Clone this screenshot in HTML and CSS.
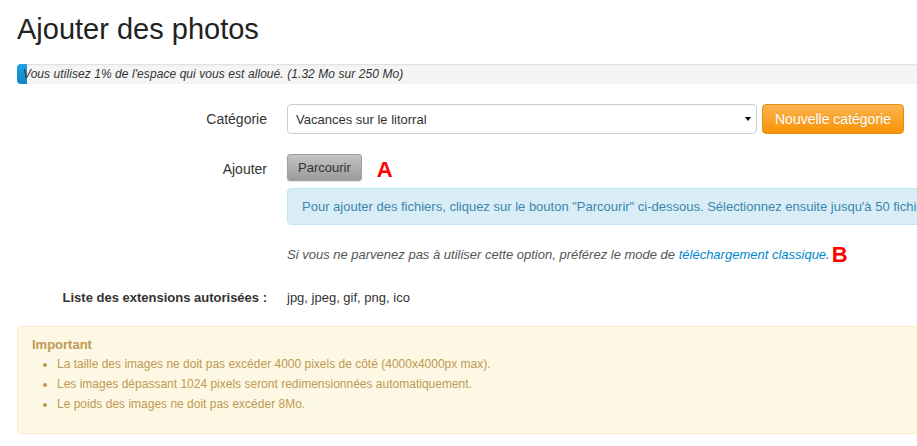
FILE: index.html
```html
<!DOCTYPE html>
<html lang="fr">
<head>
<meta charset="utf-8">
<title>Ajouter des photos</title>
<link rel="stylesheet" href="styles.css">
</head>
<body>
<div class="page">
  <h1 class="title">Ajouter des photos</h1>
  <div class="quota">
    <div class="quota-fill" style="width:10px"></div>
    <span class="quota-text">Vous utilisez 1% de l'espace qui vous est alloué. (1.32 Mo sur 250 Mo)</span>
  </div>

  <div class="form">
    <div class="label">Catégorie</div>
    <div class="field cat-field">
      <div class="select">
        <span>Vacances sur le litorral</span>
        <span class="caret"></span>
      </div>
      <button class="btn-orange">Nouvelle catégorie</button>
    </div>

    <div class="label label-add">Ajouter</div>
    <div class="field add-field">
      <div class="browse-row">
        <button class="btn-gray">Parcourir</button>
        <span class="mark mark-a">A</span>
      </div>
      <div class="alert-info">Pour ajouter des fichiers, cliquez sur le bouton "Parcourir" ci-dessous. Sélectionnez ensuite jusqu'à 50 fichiers à la fois.</div>
      <p class="hint">Si vous ne parvenez pas à utiliser cette option, préférez le mode de <a href="#" class="link">téléchargement classique</a>.<span class="mark mark-b">B</span></p>
    </div>

    <div class="label label-bold">Liste des extensions autorisées :</div>
    <div class="field ext">jpg, jpeg, gif, png, ico</div>
  </div>

  <div class="alert-warning">
    <div class="warn-title">Important</div>
    <ul class="warn-list">
      <li>La taille des images ne doit pas excéder 4000 pixels de côté (4000x4000px max).</li>
      <li>Les images dépassant 1024 pixels seront redimensionnées automatiquement.</li>
      <li>Le poids des images ne doit pas excéder 8Mo.</li>
    </ul>
  </div>
</div>
</body>
</html>
```

FILE: styles.css
```css
html, body {
  margin: 0;
  padding: 0;
  background: #fff;
  overflow: hidden;
}
body {
  font-family: "Liberation Sans", Arial, sans-serif;
  font-size: 13px;
  color: #333;
}
.page {
  width: 960px;
  padding: 0 0 0 17px;
}
.title {
  margin: 0;
  padding-top: 12px;
  font-size: 29px;
  font-weight: normal;
  line-height: 34px;
  color: #222;
}
.quota {
  position: relative;
  margin-top: 18px;
  height: 20px;
  background: #f5f5f5;
  border-radius: 4px 0 0 4px;
  box-shadow: inset 0 1px 2px rgba(0,0,0,0.1);
  display: flex;
  align-items: center;
}
.quota-fill {
  position: absolute;
  left: 0;
  top: 0;
  bottom: 0;
  background: linear-gradient(#1fa3e3, #1383c6);
  border-radius: 4px 0 0 4px;
}
.quota-text {
  position: relative;
  padding-left: 6px;
  font-style: italic;
  font-size: 12px;
  letter-spacing: 0.07px;
  color: #333;
}
.form {
  display: grid;
  grid-template-columns: 250px 1fr;
  column-gap: 20px;
  margin-top: 20px;
}
.label {
  text-align: right;
  font-size: 14px;
  color: #333;
  line-height: 30px;
}
.label-add {
  margin-top: 22px;
  line-height: 27px;
}
.label-bold {
  font-weight: bold;
  font-size: 13px;
  line-height: 20px;
}
.cat-field {
  display: flex;
  gap: 5px;
}
.select {
  height: 28px;
  border: 1px solid #ccc;
  border-radius: 4px;
  display: flex;
  align-items: center;
  justify-content: space-between;
  padding: 0 5px 0 8px;
  box-sizing: content-box;
  width: 455px;
  font-size: 13px;
  color: #333;
}
.caret {
  width: 0;
  height: 0;
  border-left: 3px solid transparent;
  border-right: 3px solid transparent;
  border-top: 4px solid #000;
}
.btn-orange {
  height: 30px;
  padding: 0 12px;
  border: 1px solid #e38d13;
  border-radius: 4px;
  background: linear-gradient(#fbb450, #f89406);
  color: #fff;
  font-family: inherit;
  font-size: 14px;
  text-shadow: 0 -1px 0 rgba(0,0,0,0.1);
}
.add-field {
  margin-top: 20px;
}
.browse-row {
  display: flex;
  align-items: center;
  gap: 15px;
}
.btn-gray {
  height: 27px;
  padding: 0 10px;
  border: 1px solid #a0a0a0;
  border-radius: 3px;
  background: linear-gradient(#c4c4c4, #9b9b9b);
  color: #333;
  font-family: inherit;
  font-size: 13px;
  box-shadow: 0 1px 1px rgba(0,0,0,0.1);
}
.mark {
  color: #f00;
  font-weight: bold;
  font-style: normal;
  font-size: 22px;
  line-height: 22px;
}
.mark-a {
  margin-top: 4px;
}
.mark-b {
  margin-left: 2px;
  vertical-align: -3px;
}
.alert-info {
  margin-top: 7px;
  width: 640px;
  height: 35px;
  display: flex;
  align-items: center;
  padding-left: 14px;
  background: #d9edf7;
  border: 1px solid #bce8f1;
  border-radius: 4px 0 0 4px;
  color: #3a87ad;
  font-size: 13px;
  white-space: nowrap;
  overflow: hidden;
}
.hint {
  margin: 19px 0 0 0;
  font-style: italic;
  color: #555;
  font-size: 13px;
  line-height: 18px;
  white-space: nowrap;
}
.link {
  color: #0088cc;
  text-decoration: none;
}
.label-bold, .ext {
  margin-top: 22px;
}
.ext {
  line-height: 20px;
  font-size: 13px;
  color: #333;
}
.alert-warning {
  margin-top: 18px;
  height: 108px;
  box-sizing: border-box;
  padding: 9px 14px;
  background: #fcf8e3;
  border: 1px solid #faebcc;
  border-radius: 4px 0 0 4px;
  color: #c09853;
  font-size: 13px;
}
.warn-title {
  font-weight: bold;
  line-height: 18px;
}
.warn-list {
  margin: 0;
  padding-left: 25px;
  font-size: 12px;
}
.warn-list li {
  line-height: 20px;
}
```
